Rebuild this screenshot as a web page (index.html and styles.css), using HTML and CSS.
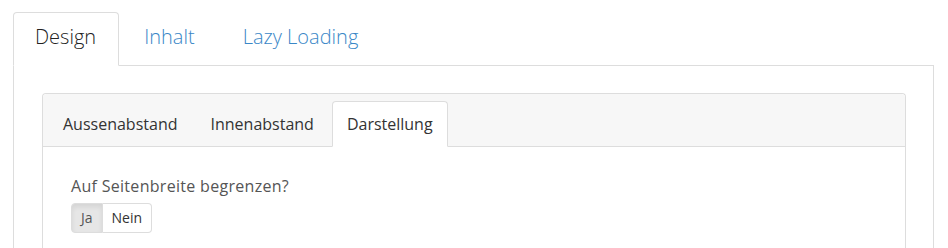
FILE: index.html
```html
<!DOCTYPE html>
<html lang="de">
<head>
<meta charset="utf-8">
<title>Design</title>
<link rel="stylesheet" href="styles.css">
</head>
<body>
<div class="page">
  <ul class="tabs">
    <li class="tab active"><a>Design</a></li>
    <li class="tab"><a>Inhalt</a></li>
    <li class="tab"><a>Lazy Loading</a></li>
  </ul>
  <div class="outer-content">
    <div class="panel">
      <ul class="subtabs">
        <li class="subtab"><a>Aussenabstand</a></li>
        <li class="subtab"><a>Innenabstand</a></li>
        <li class="subtab active"><a>Darstellung</a></li>
      </ul>
      <div class="panel-body">
        <label class="field-label">Auf Seitenbreite begrenzen?</label>
        <div class="btn-group">
          <button class="btn active">Ja</button>
          <button class="btn">Nein</button>
        </div>
      </div>
    </div>
  </div>
</div>
</body>
</html>
```

FILE: styles.css
```css
* { box-sizing: border-box; }
html, body {
  margin: 0;
  padding: 0;
  background: #fff;
  font-family: "Open Sans", "Noto Sans", "Liberation Sans", sans-serif;
  color: #333;
}
.page {
  padding: 12px 14px 0 13px;
  height: 248px;
  overflow: hidden;
}
.tabs {
  list-style: none;
  margin: 0;
  padding: 0;
  display: flex;
  border-bottom: 1px solid #ddd;
}
.tab {
  margin-bottom: -1px;
  margin-right: 3px;
}
.tab a {
  display: block;
  padding: 12px 22px 16px 21px;
  font-size: 20px;
  font-weight: 300;
  line-height: 24px;
  color: #3a87c7;
  border: 1px solid transparent;
  border-radius: 4px 4px 0 0;
}
.tab.active a {
  color: #222;
  background: #fff;
  border-color: #ddd;
  border-bottom-color: #fff;
}
.outer-content {
  border-left: 1px solid #ddd;
  border-right: 1px solid #ddd;
  padding: 27px 27px 0 28px;
  height: 200px;
}
.panel {
  border: 1px solid #ddd;
  border-bottom: none;
  border-radius: 4px 4px 0 0;
  height: 180px;
}
.subtabs {
  list-style: none;
  margin: 0;
  padding: 7px 5px 0 5px;
  display: flex;
  background: #f7f7f7;
  border-bottom: 1px solid #ddd;
  border-radius: 4px 4px 0 0;
}
.subtab {
  margin-bottom: -1px;
  margin-right: 3px;
}
.subtab a {
  display: block;
  padding: 11px 14px;
  font-size: 16px;
  line-height: 22px;
  color: #333;
  border: 1px solid transparent;
  border-radius: 4px 4px 0 0;
}
.subtab.active a {
  background: #fff;
  border-color: #ddd;
  border-bottom-color: #fff;
}
.panel-body {
  padding: 28px 28px 0 28px;
}
.field-label {
  display: block;
  font-size: 16px;
  line-height: 22px;
  letter-spacing: 0.3px;
  color: #555;
  margin-bottom: 6px;
}
.btn-group {
  display: inline-flex;
}
.btn {
  font-family: inherit;
  font-size: 14px;
  line-height: 20px;
  padding: 4px 9px;
  height: 30px;
  color: #333;
  background: #fff;
  border: 1px solid #ddd;
  margin: 0;
}
.btn:first-child {
  border-radius: 4px 0 0 4px;
}
.btn:last-child {
  border-radius: 0 4px 4px 0;
  border-left: none;
}
.btn.active {
  background: #e6e6e6;
  color: #555;
  box-shadow: inset 0 3px 5px rgba(0,0,0,0.08);
}
```
